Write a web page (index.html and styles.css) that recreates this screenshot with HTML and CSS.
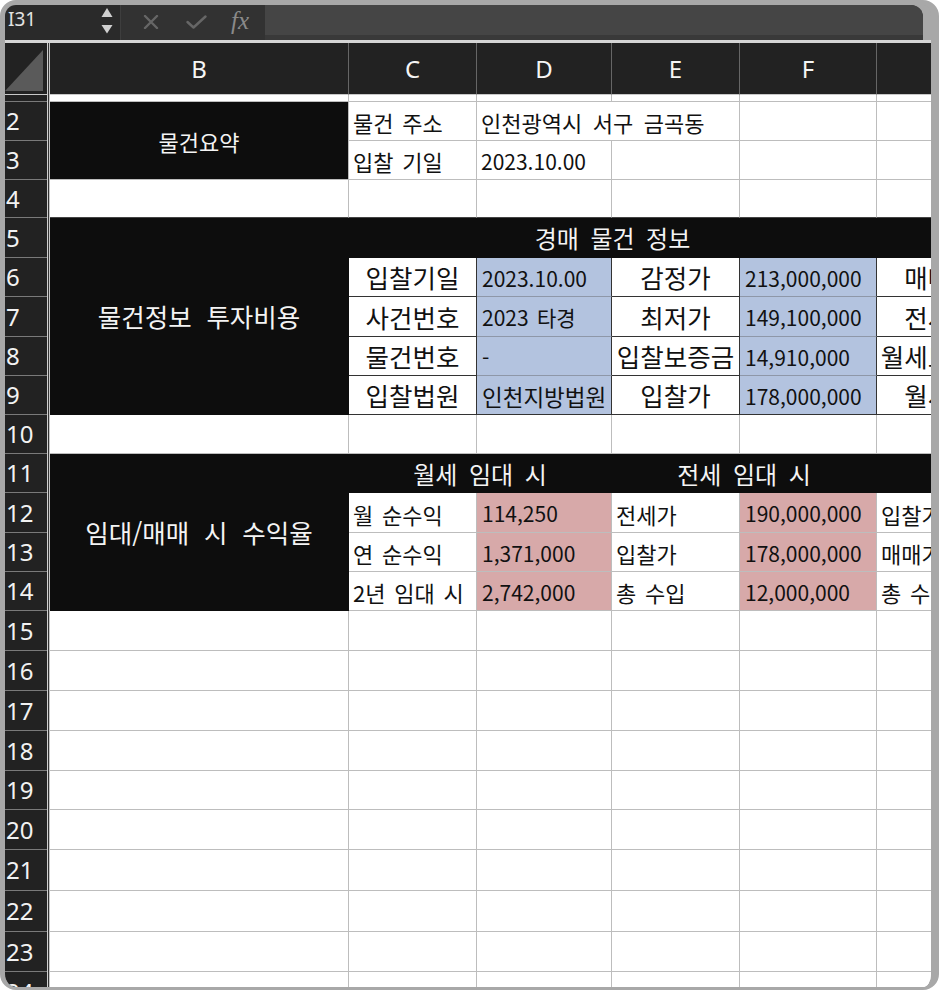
FILE: index.html
```html
<!DOCTYPE html>
<html lang="ko">
<head>
<meta charset="utf-8">
<title>Sheet</title>
<link rel="stylesheet" href="styles.css">
</head>
<body>
<div class="frame">
  <div class="fbar">
    <div class="namebox">
      <span class="ref">I31</span>
      <svg class="spin" width="12" height="26" viewBox="0 0 12 26"><path d="M6 0 L11.5 9 L0.5 9Z" fill="#d0d0d0"/><path d="M0.5 17 L11.5 17 L6 25.5Z" fill="#d0d0d0"/></svg>
    </div>
    <div class="fbtns">
      <svg class="ico-x" width="16" height="14" viewBox="0 0 16 14"><path d="M2 1 L14 13 M14 1 L2 13" stroke="#666" stroke-width="2.4" stroke-linecap="round"/></svg>
      <svg class="ico-ok" width="21" height="14" viewBox="0 0 21 14"><path d="M1.5 7 L7.5 12.5 L19.5 1.5" stroke="#666" stroke-width="2.4" fill="none" stroke-linecap="round" stroke-linejoin="round"/></svg>
      <span class="fx">fx</span>
    </div>
    <div class="fwrap"><div class="finput"></div></div>
  </div>
  <div class="hline"></div>
  <div class="sheet">
    <div class="grid">
      <!-- column header -->
      <div class="corner"><svg width="42" height="52" viewBox="0 0 42 52"><path d="M0 48 L38 7 L38 48Z" fill="#5a5a5a"/></svg></div><div class="sp"></div>
      <div class="ch">B</div><div class="ch">C</div><div class="ch">D</div><div class="ch">E</div><div class="ch">F</div><div class="ch">G</div>

      <!-- row 1 -->
      <div class="rh"></div><div class="sp"></div>
      <div class="c"></div><div class="c"></div><div class="c"></div><div class="c"></div><div class="c"></div><div class="c"></div>

      <!-- row 2 -->
      <div class="rh">2</div><div class="sp"></div>
      <div class="c blk r2 title-sm">물건요약</div>
      <div class="c kr">물건 주소</div>
      <div class="c cspan2 addr">인천광역시 서구 금곡동</div>
      <div class="c"></div><div class="c"></div>

      <!-- row 3 -->
      <div class="rh">3</div><div class="sp"></div>
      <div class="c kr">입찰 기일</div>
      <div class="c">2023.10.00</div>
      <div class="c"></div><div class="c"></div><div class="c"></div>

      <!-- row 4 -->
      <div class="rh">4</div><div class="sp"></div>
      <div class="c bd"></div><div class="c bd"></div><div class="c bd"></div><div class="c bd"></div><div class="c bd"></div><div class="c bd"></div>

      <!-- row 5 -->
      <div class="rh">5</div><div class="sp"></div>
      <div class="c blk blkb r5 title-lg">물건정보 투자비용</div>
      <div class="c blk blkb cspan4 hd">경매 물건 정보</div>
      <div class="c blk blkb"></div>

      <!-- row 6 -->
      <div class="rh">6</div><div class="sp"></div>
      <div class="c dk big">입찰기일</div>
      <div class="c blue">2023.10.00</div>
      <div class="c dk big">감정가</div>
      <div class="c blue">213,000,000</div>
      <div class="c dk big">매매가</div>

      <!-- row 7 -->
      <div class="rh">7</div><div class="sp"></div>
      <div class="c dk big">사건번호</div>
      <div class="c blue">2023 타경</div>
      <div class="c dk big">최저가</div>
      <div class="c blue">149,100,000</div>
      <div class="c dk big">전세가</div>

      <!-- row 8 -->
      <div class="rh">8</div><div class="sp"></div>
      <div class="c dk big">물건번호</div>
      <div class="c blue">-</div>
      <div class="c dk big">입찰보증금</div>
      <div class="c blue">14,910,000</div>
      <div class="c dk big">월세보증금</div>

      <!-- row 9 -->
      <div class="rh">9</div><div class="sp"></div>
      <div class="c dk big">입찰법원</div>
      <div class="c blue last kr2">인천지방법원</div>
      <div class="c dk big">입찰가</div>
      <div class="c blue last">178,000,000</div>
      <div class="c dk big">월세가</div>

      <!-- row 10 -->
      <div class="rh">10</div><div class="sp"></div>
      <div class="c"></div><div class="c"></div><div class="c"></div><div class="c"></div><div class="c"></div><div class="c"></div>

      <!-- row 11 -->
      <div class="rh">11</div><div class="sp"></div>
      <div class="c blk blkb r4 title-lg">임대/매매 시 수익율</div>
      <div class="c blk blkb cspan2 hd">월세 임대 시</div>
      <div class="c blk blkb cspan2 hd">전세 임대 시</div>
      <div class="c blk blkb hd g11">매매 시</div>

      <!-- row 12 -->
      <div class="rh">12</div><div class="sp"></div>
      <div class="c kr">월 순수익</div>
      <div class="c pink">114,250</div>
      <div class="c kr">전세가</div>
      <div class="c pink">190,000,000</div>
      <div class="c kr">입찰가</div>

      <!-- row 13 -->
      <div class="rh">13</div><div class="sp"></div>
      <div class="c kr">연 순수익</div>
      <div class="c pink">1,371,000</div>
      <div class="c kr">입찰가</div>
      <div class="c pink">178,000,000</div>
      <div class="c kr">매매가</div>

      <!-- row 14 -->
      <div class="rh">14</div><div class="sp"></div>
      <div class="c kr">2년 임대 시</div>
      <div class="c pink">2,742,000</div>
      <div class="c kr">총 수입</div>
      <div class="c pink">12,000,000</div>
      <div class="c kr">총 수입</div>

      <!-- rows 15-24 -->
      <div class="rh">15</div><div class="sp"></div>
      <div class="c"></div><div class="c"></div><div class="c"></div><div class="c"></div><div class="c"></div><div class="c"></div>
      <div class="rh">16</div><div class="sp"></div>
      <div class="c"></div><div class="c"></div><div class="c"></div><div class="c"></div><div class="c"></div><div class="c"></div>
      <div class="rh">17</div><div class="sp"></div>
      <div class="c"></div><div class="c"></div><div class="c"></div><div class="c"></div><div class="c"></div><div class="c"></div>
      <div class="rh">18</div><div class="sp"></div>
      <div class="c"></div><div class="c"></div><div class="c"></div><div class="c"></div><div class="c"></div><div class="c"></div>
      <div class="rh">19</div><div class="sp"></div>
      <div class="c"></div><div class="c"></div><div class="c"></div><div class="c"></div><div class="c"></div><div class="c"></div>
      <div class="rh">20</div><div class="sp"></div>
      <div class="c"></div><div class="c"></div><div class="c"></div><div class="c"></div><div class="c"></div><div class="c"></div>
      <div class="rh">21</div><div class="sp"></div>
      <div class="c"></div><div class="c"></div><div class="c"></div><div class="c"></div><div class="c"></div><div class="c"></div>
      <div class="rh">22</div><div class="sp"></div>
      <div class="c"></div><div class="c"></div><div class="c"></div><div class="c"></div><div class="c"></div><div class="c"></div>
      <div class="rh">23</div><div class="sp"></div>
      <div class="c"></div><div class="c"></div><div class="c"></div><div class="c"></div><div class="c"></div><div class="c"></div>
      <div class="rh">24</div><div class="sp"></div>
      <div class="c"></div><div class="c"></div><div class="c"></div><div class="c"></div><div class="c"></div><div class="c"></div>
    </div>
  </div>
</div>
</body>
</html>
```

FILE: styles.css
```css
* { box-sizing: border-box; }
html, body { margin: 0; padding: 0; background: #ffffff; }
body { font-family: "Noto Sans CJK KR", "Noto Sans", sans-serif; }

.frame {
  width: 939px;
  height: 990px;
  border: 5px solid #a8a8a8;
  border-right-width: 8px;
  border-bottom-width: 3px;
  border-radius: 16px;
  overflow: hidden;
  display: flex;
  flex-direction: column;
  background: #a8a8a8;
}

/* formula bar */
.fbar { height: 35px; flex: none; display: flex; }
.namebox {
  width: 115px;
  background: #2a2a2a;
  display: flex;
  align-items: flex-start;
}
.ref {
  font-family: "Noto Sans", sans-serif;
  font-size: 19px;
  line-height: 28px;
  color: #e2e2e2;
  padding-left: 3px;
}
.spin { margin: 3px 7px 0 auto; }
.fbtns {
  width: 145px;
  background: #323232;
  border-left: 1px solid #3e3e3e;
  display: flex;
  align-items: flex-start;
  padding-left: 22px;
}
.ico-x { margin-top: 10px; }
.ico-ok { margin-top: 10px; margin-left: 27px; }
.fx {
  font-family: "Liberation Serif", serif;
  font-style: italic;
  font-size: 25px;
  line-height: 26px;
  color: #8a8a8a;
  margin-left: 24px;
  margin-top: 3px;
}
.fwrap {
  flex: 1;
  margin-right: 8px;
  background: #393939;
  border-top-right-radius: 12px;
}
.finput {
  height: 30px;
  background: #454545;
  border-top-right-radius: 12px;
}
.hline { height: 3px; flex: none; background: #d6d6d6; }

/* sheet */
.sheet { flex: 1; overflow: hidden; background: #ffffff; }
.grid {
  display: grid;
  width: max-content;
  grid-template-columns: 42px 3px 299px 128px 135px 128px 137px 126px;
  grid-template-rows: 52px 7px 39px 39px 38px 40px 39px 40px 39px 39px 39px 39px 40px 39px 39px 40px 40px 40px 40px 39px 40px 41px 41px 40px 40px;
}

.corner { background: #222222; border-bottom: 1px solid #c8c8c8; }
.corner svg { display: block; }
.sp {
  background: linear-gradient(to right, #d0d0d0 0 1px, #333333 1px 2px, #c4c4c4 2px 3px);
}
.ch {
  background: #222222;
  color: #f5f5f5;
  font-family: "Noto Sans", sans-serif;
  font-size: 24px;
  display: flex;
  align-items: center;
  justify-content: center;
  border-right: 1px solid #666666;
  border-bottom: 1px solid #c8c8c8;
}
.rh {
  background: #222222;
  color: #f2f2f2;
  font-family: "Noto Sans", sans-serif;
  font-size: 24px;
  line-height: 1;
  display: flex;
  align-items: center;
  padding-left: 1px;
  border-bottom: 1px solid #7a7a7a;
}

.c {
  background: #ffffff;
  color: #111111;
  border-right: 1px solid #bdbdbd;
  border-bottom: 1px solid #bdbdbd;
  display: flex;
  align-items: center;
  padding: 2px 0 0 4px;
  font-size: 21px;
  line-height: 1;
  white-space: nowrap;
  word-spacing: 0.12em;
}
.kr { font-size: 22px; }
.kr2 { font-size: 22.5px; }
.cspan2 { grid-column: span 2; }
.cspan4 { grid-column: span 4; }
.r2 { grid-row: span 2; }
.r4 { grid-row: span 4; }
.r5 { grid-row: span 5; }
.addr { font-size: 22px; word-spacing: 0.2em; }
.bd { border-bottom-color: #444444; }

.blk {
  background: #0d0d0d;
  color: #f4f4f4;
  justify-content: center;
  padding: 0;
}
.blkb { border-right-color: #0d0d0d; border-bottom-color: #0d0d0d; }
.title-sm { font-size: 22px; }
.title-lg { font-size: 25.5px; word-spacing: 0.3em; }
.hd { font-size: 24px; word-spacing: 0.2em; padding-top: 1px; }
.g11 { justify-content: flex-start; padding-left: 56px; }

.big {
  justify-content: center;
  padding: 0;
  font-size: 25.5px;
}
.dk { border-right-color: #333333; border-bottom-color: #333333; }
.blue {
  background: #b3c3df;
  border-right-color: #333333;
  border-bottom-color: #8e97a8;
  padding-left: 5px;
}
.blue.last { border-bottom-color: #333333; }
.pink {
  background: #d7a9a9;
  padding-left: 5px;
}
```
